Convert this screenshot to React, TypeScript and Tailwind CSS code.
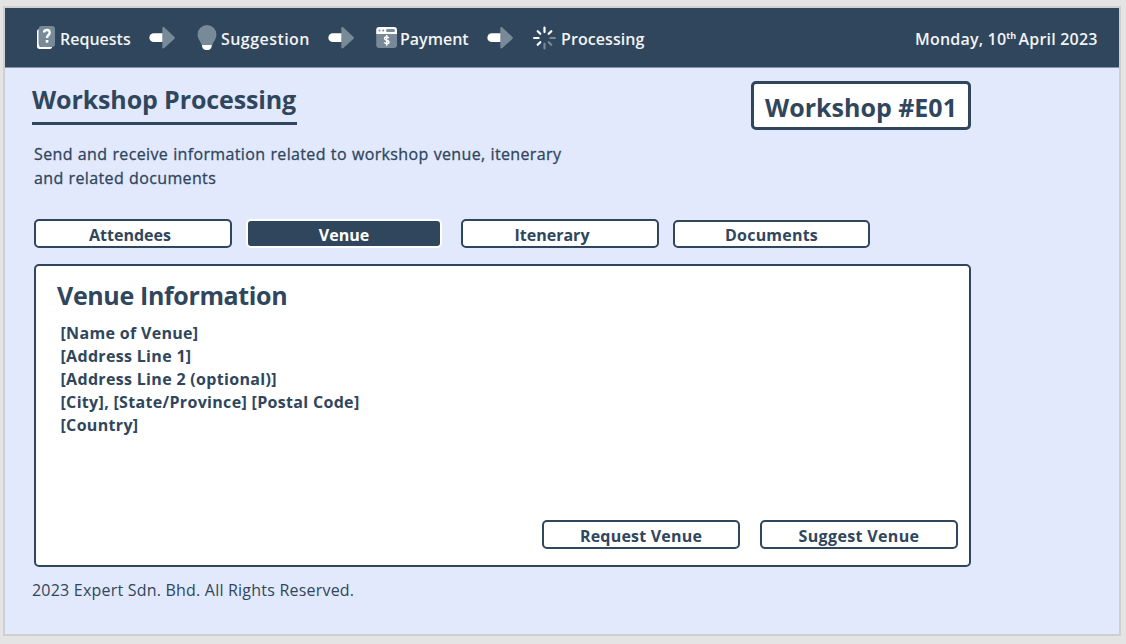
import type { ReactNode } from "react";

function Arrow() {
  return (
    <svg className="block h-6 w-7 shrink-0" viewBox="0 0 28 24">
      <path d="M15 7.2H5.800a4.400 4.400 0 0 0 0 8.900H15z" fill="#fff" />
      <path d="M14.300 2.300c0-1.300 1.200-1.700 2.100-.8l9.900 9.300c.8.800.8 1.300 0 2.100l-9.900 9.200c-.9.900-2.100.5-2.100-.8z" fill="#788998" />
    </svg>
  );
}

function RequestIcon() {
  return (
    <svg className="block h-6 w-5 shrink-0" viewBox="0 0 20 24">
      <path d="M2.800 3C1.500 3.400 1 4.400 1 5.800V20.200C1 22 2 23 3.700 23H13.500C15 23 15.700 22.500 16.200 21H6.500C4 21 2.800 19.800 2.800 17.400z" fill="#fff" />
      <rect x="2.800" y="0" width="16.200" height="21" rx="3" fill="#788998" />
      <path d="M8.100 6.500C8.100 4.700 9.300 4 10.900 4s2.800 1 2.800 2.600c0 1.500-.8 2.100-1.600 2.800-.8.700-1.100 1.300-1.100 2.700" fill="none" stroke="#fff" strokeWidth="2.400" />
      <rect x="9.700" y="13.900" width="2.700" height="2.900" rx=".7" fill="#fff" />
    </svg>
  );
}

function BulbIcon() {
  return (
    <svg className="block h-[26px] w-5 shrink-0" viewBox="0 0 20 26">
      <path d="M10 0a9.400 9.400 0 0 0-9.400 9.500c0 4.500 2.800 6.500 4 10.500h10.900c1.200-4 3.900-6 3.900-10.500A9.400 9.400 0 0 0 10 0z" fill="#788998" />
      <path d="M5 20h9.800c0 3-1.400 5-4.900 5S5 23 5 20z" fill="#fff" />
    </svg>
  );
}

function PaymentIcon() {
  return (
    <svg className="block h-[22px] w-[22px] shrink-0" viewBox="0 0 22 22">
      <path d="M.2 7H21v11a3 3 0 0 1-3 3H3.200a3 3 0 0 1-3-3z" fill="#788998" />
      <path d="M.2 7V3a3 3 0 0 1 3-3H18a3 3 0 0 1 3 3v4z" fill="#fff" />
      <circle cx="3.500" cy="3.500" r="1" fill="#788998" />
      <circle cx="7.200" cy="3.500" r="1" fill="#788998" />
      <rect x="10" y="2" width="9" height="3" rx="1.500" fill="#788998" />
      <path d="M12.800 11.200c-.4-.8-1.100-1.100-2.200-1.100-1.300 0-2.100.6-2.100 1.500 0 2.200 4.500 1 4.500 3.300 0 1-.9 1.600-2.300 1.600-1.200 0-2-.4-2.400-1.300M10.700 8v10.800" fill="none" stroke="#fff" strokeWidth="1.500" />
    </svg>
  );
}

function SpinnerIcon() {
  return (
    <svg className="block h-6 w-6 shrink-0" viewBox="0 0 24 24" fill="none" strokeWidth="2.200" strokeLinecap="round">
      <path d="M12.500 1.600v4.500M2.100 12h4.500M5.700 5.200l2.600 2.600M19.300 5.200l-2.600 2.600M5.700 18.800l2.600-2.600" stroke="#fff" />
      <path d="M12.500 17.900v4.500M18.400 12h4.500M16.700 16.200l2.600 2.600" stroke="#788998" />
    </svg>
  );
}

type ButtonProps = { children: ReactNode; className?: string; active?: boolean };

function Button({ children, className = "", active = false }: ButtonProps) {
  const tone = active
    ? "bg-[#2f465d] text-white border-white"
    : "bg-white border-[#2f465d]";
  return (
    <button
      className={`flex shrink-0 items-center justify-center whitespace-nowrap rounded-[5px] border-2 text-base leading-none font-bold ${tone} ${className}`}
    >
      {children}
    </button>
  );
}

export default function App() {
  return (
    <div className="h-[644px] w-[1126px] overflow-hidden bg-[#e4e4e4] pt-1.5 pl-[3px] font-['Open_Sans','Noto_Sans',sans-serif] text-[#2f465d]">
      <div className="h-[630px] w-[1118px] border-2 border-[#cfd0d2] bg-[#e3e9fc]">
        <header className="flex h-[60px] items-center border-b border-[#8592ab] bg-[#2f465d] pl-[31px] text-base font-semibold whitespace-nowrap text-[#f3f3f3]">
          <RequestIcon />
          <span className="ml-1 w-[88px] pt-0.5">Requests</span>
          <Arrow />
          <span className="w-[21px]" />
          <BulbIcon />
          <span className="ml-1 w-[106px] pt-0.5 tracking-[0.45px]">Suggestion</span>
          <Arrow />
          <span className="w-[21px]" />
          <PaymentIcon />
          <span className="ml-0.5 w-[86px] pt-0.5">Payment</span>
          <Arrow />
          <span className="w-[18px]" />
          <SpinnerIcon />
          <span className="ml-[5px] w-[354px] pt-0.5 tracking-[0.08px]">Processing</span>
          <span className="pt-0.5 tracking-[0.2px]">
            Monday, 10<sup className="top-[-6px] text-[9px] font-bold tracking-normal">th</sup>
            <span className="-ml-0.5"> April 2023</span>
          </span>
        </header>

        <main className="w-[966px] pl-[27px]">
          <div className="flex h-[76px] items-start justify-between">
            <h1 className="mt-3.5 h-[43px] w-[265px] border-b-3 border-[#2f465d] text-[25px] leading-[34px] font-bold tracking-[-0.12px] whitespace-nowrap">
              Workshop Processing
            </h1>
            <div className="mt-[13px] flex h-[49px] w-[220px] items-center justify-center rounded-[5px] border-3 border-[#2f465d] bg-white pt-1 text-[25px] leading-none font-bold whitespace-nowrap">
              Workshop #E01
            </div>
          </div>
          <p className="-mt-0.5 pl-0.5 text-base leading-6 font-medium tracking-[0.36px] whitespace-nowrap [-webkit-text-stroke:0.3px_#2f465d] [word-spacing:0.5px]">
            Send and receive information related to workshop venue, itenerary
            <br />
            and related documents
          </p>
          <nav className="mt-[29px] flex h-[30px] items-start pl-[2px]">
            <Button className="h-[29px] w-[198px] pr-1.5 pt-0.5">Attendees</Button>
            <Button active className="ml-[14px] h-[29px] w-[196px] pt-0.5">Venue</Button>
            <Button className="ml-[19px] h-[29px] w-[198px] pr-4 pt-0.5">Itenerary</Button>
            <Button className="mt-px ml-[14px] h-[28px] w-[197px] pt-px tracking-[0.2px]">Documents</Button>
          </nav>
          <section className="mt-[15px] ml-0.5 flex h-[303px] w-[937px] flex-col rounded-[5px] border-2 border-[#2f465d] bg-white">
            <h2 className="mt-3 pl-[21px] text-[25px] leading-[34px] font-bold tracking-[-0.36px] whitespace-nowrap">Venue Information</h2>
            <address className="mt-2.5 pl-[24.5px] text-base leading-[23px] font-bold tracking-[0.32px] whitespace-nowrap not-italic">
              <div>[Name of Venue]</div>
              <div>[Address Line 1]</div>
              <div>[Address Line 2 (optional)]</div>
              <div>[City], [State/Province] [Postal Code]</div>
              <div>[Country]</div>
            </address>
            <div className="mt-auto mr-[11px] mb-4 flex justify-end gap-5">
              <Button className="h-[29px] w-[198px] pt-[3px] tracking-[0.2px]">Request Venue</Button>
              <Button className="h-[29px] w-[198px] pt-[3px] tracking-[0.35px]">Suggest Venue</Button>
            </div>
          </section>
        </main>
        <footer className="mt-[11px] pl-[27px] text-base leading-6 tracking-[0.21px] whitespace-nowrap">2023 Expert Sdn. Bhd. All Rights Reserved.</footer>
      </div>
    </div>
  );
}
